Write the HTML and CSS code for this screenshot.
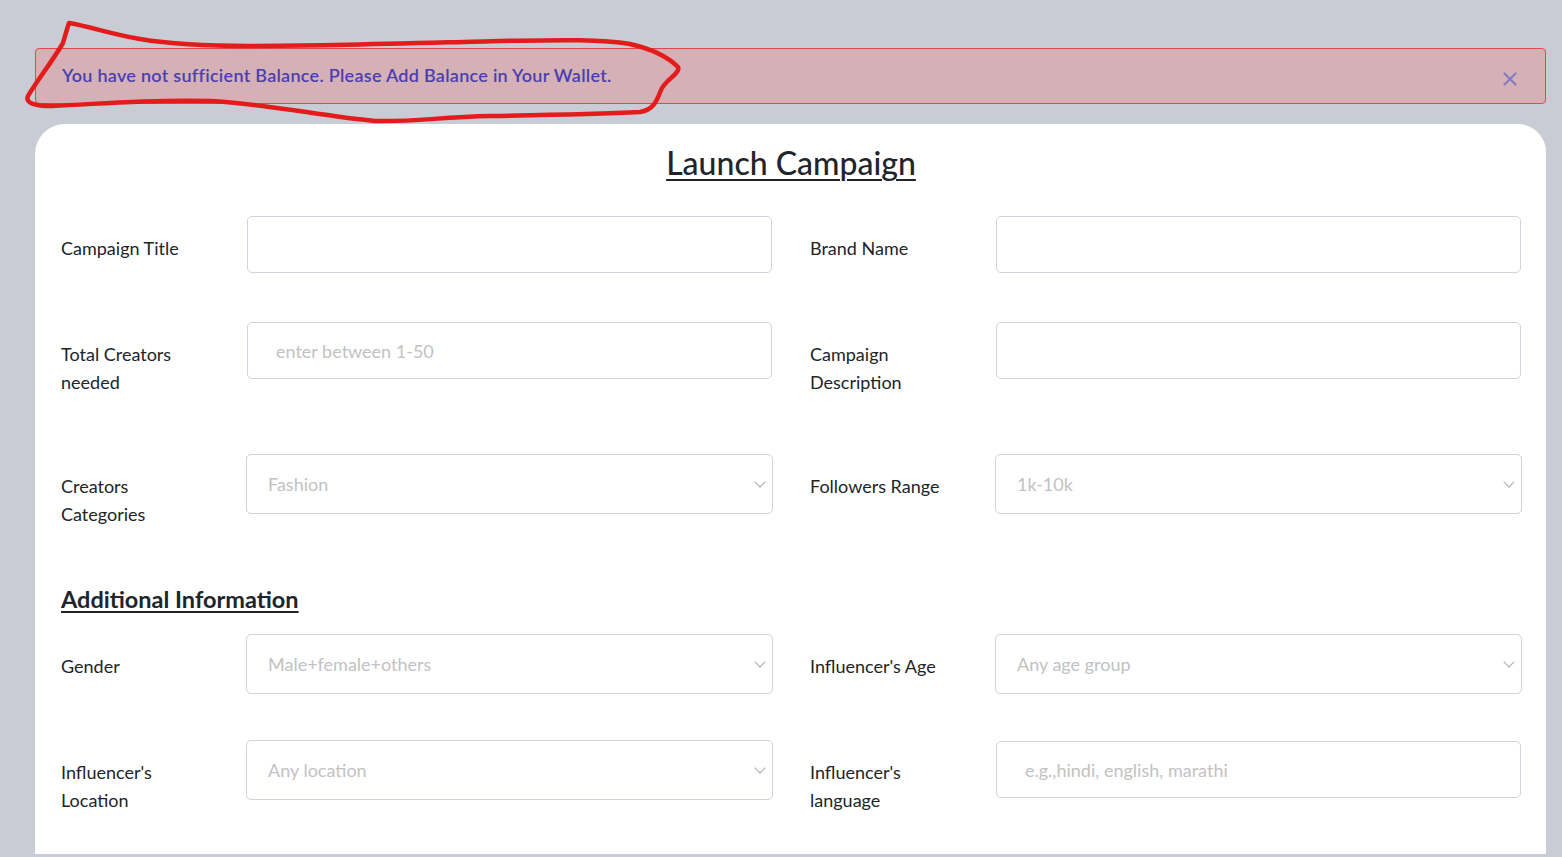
FILE: index.html
```html
<!DOCTYPE html>
<html lang="en">
<head>
<meta charset="utf-8">
<title>Launch Campaign</title>
<link rel="stylesheet" href="styles.css">
</head>
<body>
<div class="page">
  <div class="alert">
    <span class="alert-text">You have not sufficient Balance. Please Add Balance in Your Wallet.</span>
    <button class="close" type="button" aria-label="Close">
      <svg width="14" height="14" viewBox="0 0 14 14"><path d="M1.5 1.5 L12.5 12.5 M12.5 1.5 L1.5 12.5" stroke="#8a7bc0" stroke-width="2.2" stroke-linecap="round"/></svg>
    </button>
  </div>

  <div class="card">
    <h2 class="title">Launch Campaign</h2>

    <div class="row">
      <div class="group">
        <label class="label">Campaign Title</label>
        <div class="field"><input class="input" type="text"></div>
      </div>
      <div class="group">
        <label class="label">Brand Name</label>
        <div class="field"><input class="input" type="text"></div>
      </div>
    </div>

    <div class="row">
      <div class="group">
        <label class="label">Total Creators<br>needed</label>
        <div class="field"><input class="input" type="text" placeholder="enter between 1-50"></div>
      </div>
      <div class="group">
        <label class="label">Campaign<br>Description</label>
        <div class="field"><input class="input" type="text"></div>
      </div>
    </div>

    <div class="row">
      <div class="group">
        <label class="label">Creators<br>Categories</label>
        <div class="field select-wrap"><select class="select"><option>Fashion</option></select></div>
      </div>
      <div class="group">
        <label class="label">Followers Range</label>
        <div class="field select-wrap"><select class="select"><option>1k-10k</option></select></div>
      </div>
    </div>

    <h3 class="subtitle">Additional Information</h3>

    <div class="row row-tight">
      <div class="group">
        <label class="label">Gender</label>
        <div class="field select-wrap"><select class="select"><option>Male+female+others</option></select></div>
      </div>
      <div class="group">
        <label class="label">Influencer's Age</label>
        <div class="field select-wrap"><select class="select"><option>Any age group</option></select></div>
      </div>
    </div>

    <div class="row row-last">
      <div class="group">
        <label class="label">Influencer's<br>Location</label>
        <div class="field select-wrap"><select class="select"><option>Any location</option></select></div>
      </div>
      <div class="group">
        <label class="label">Influencer's<br>language</label>
        <div class="field field-offset"><input class="input" type="text" placeholder="e.g.,hindi, english, marathi"></div>
      </div>
    </div>
  </div>

  <svg class="scribble" width="720" height="140" viewBox="0 0 720 140">
    <path d="M69 23 C67 29 65 36 63 43 C52 62 36 82 28 96 C25 103 34 106 52 106 C100 104 150 99 210 101 C270 104 320 116 375 121 C415 122 440 117 490 116 C550 115 600 114 640 112 C654 110 657 100 661 90 C665 80 681 73 678 67 C668 57 652 49 630 44 C600 39 560 40 500 41 C420 43 330 46 250 46 C200 46 170 44 140 39 C110 34 92 27 69 23 Z" fill="none" stroke="#e41b1b" stroke-width="4.5" stroke-linecap="round" stroke-linejoin="round"/>
  </svg>
</div>
</body>
</html>
```

FILE: styles.css
```css
* { box-sizing: border-box; }

html, body {
  margin: 0;
  padding: 0;
  background: #c9ccd5;
}

body {
  font-family: "Lato", "Noto Sans", "Liberation Sans", sans-serif;
  color: #212529;
  overflow: hidden;
}

.page {
  position: relative;
  padding: 48px 16px 0 35px;
}

.alert {
  display: flex;
  align-items: center;
  justify-content: space-between;
  height: 56px;
  padding: 0 26px;
  background: #d5b0b7;
  border: 1px solid #e04a4a;
  border-radius: 4px;
  color: #4a3fae;
  font-size: 18px;
  font-weight: 600;
  letter-spacing: 0.28px;
}

.alert-text { margin-top: -2px; }

.close {
  display: flex;
  align-items: center;
  justify-content: center;
  width: 24px;
  height: 24px;
  margin: 6px -3px 0 0;
  padding: 0;
  border: 0;
  background: transparent;
}

.card {
  margin-top: 20px;
  padding: 21px 25px 31px 26px;
  background: #fff;
  border-radius: 30px 28px 0 0;
}

.title {
  margin: 0 0 35px;
  text-align: center;
  font-size: 32px;
  line-height: 36px;
  font-weight: 500;
  text-decoration: underline;
  text-decoration-thickness: 2px;
  text-underline-offset: 4px;
}

.row {
  display: flex;
  gap: 38px;
  margin-bottom: 49px;
}

.row-tight { margin-bottom: 46px; }
.row-last { margin-bottom: 0; }

.group {
  flex: 1;
  display: flex;
  align-items: flex-start;
}

.label {
  flex: 0 0 186px;
  padding: 18px 0 9px;
  font-size: 18px;
  line-height: 28px;
}

.field {
  flex: 1;
  position: relative;
}

.field-offset { margin-top: 1px; }

.input {
  display: block;
  width: 100%;
  height: 57px;
  padding: 0 28px;
  border: 1px solid #cfd3db;
  border-radius: 5px;
  font-family: inherit;
  font-size: 18px;
  color: #495057;
  background: #fff;
  outline: none;
}

.input::placeholder { color: #c2c2c2; }

.select-wrap { margin: 0 -1px; }

.select {
  display: block;
  width: 100%;
  height: 60px;
  padding: 0 21px;
  border: 1px solid #cfd3db;
  border-radius: 5px;
  font-family: inherit;
  font-size: 18px;
  color: #c2c2c2;
  background: #fff;
  appearance: none;
  -webkit-appearance: none;
  outline: none;
}

.select-wrap::after {
  content: "";
  position: absolute;
  right: 9px;
  top: 24px;
  width: 7px;
  height: 7px;
  border-right: 1.5px solid #ababab;
  border-bottom: 1.5px solid #ababab;
  transform: rotate(45deg);
  pointer-events: none;
}

.subtitle {
  margin: -1px 0 21px;
  font-size: 23.5px;
  line-height: 28px;
  font-weight: 700;
  text-decoration: underline;
  text-decoration-thickness: 2px;
  text-underline-offset: 3px;
}

.scribble {
  position: absolute;
  left: 0;
  top: 0;
  pointer-events: none;
}
```
